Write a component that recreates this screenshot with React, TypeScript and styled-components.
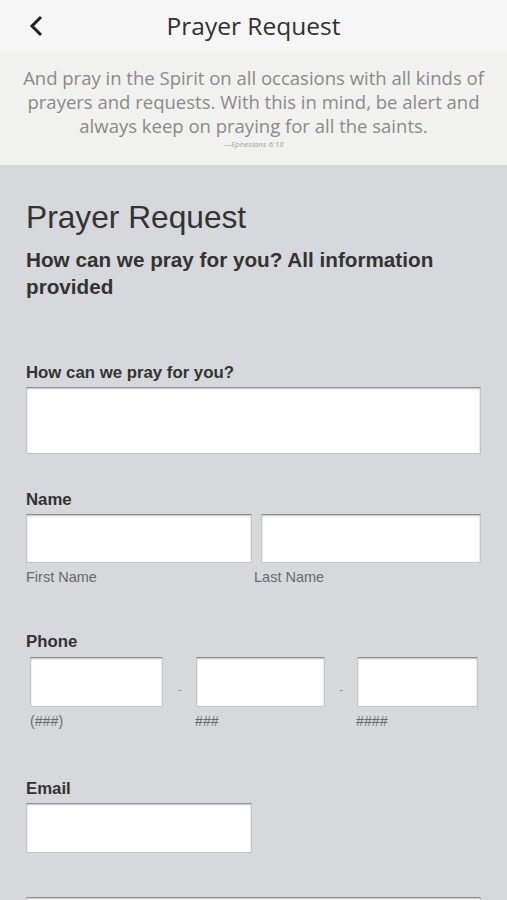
import React from 'react';
import styled, { createGlobalStyle } from 'styled-components';

const GlobalStyle = createGlobalStyle`
  html, body {
    margin: 0;
    padding: 0;
    background: #d6d8db;
  }
  * {
    box-sizing: border-box;
  }
`;

const Page = styled.div`
  width: 507px;
  height: 900px;
  background: #d6d8db;
  overflow: hidden;
`;

const Header = styled.header`
  height: 52px;
  background: #f6f6f6;
  display: grid;
  grid-template-columns: 60px 1fr 60px;
  align-items: center;
`;

const BackButton = styled.button`
  border: none;
  background: none;
  padding: 0 0 0 28px;
  height: 52px;
  display: flex;
  align-items: center;
  cursor: pointer;
`;

const HeaderTitle = styled.h1`
  margin: 0;
  text-align: center;
  font-family: 'Open Sans', sans-serif;
  font-weight: 400;
  font-size: 24.5px;
  color: #303030;
  padding-bottom: 2px;
`;

const Verse = styled.section`
  background: #f1f1ef;
  padding: 14px 8px 16px;
  text-align: center;
  font-family: 'Open Sans', sans-serif;
`;

const VerseText = styled.p`
  margin: 0;
  font-size: 18.5px;
  line-height: 24px;
  color: #8a8a8a;
`;

const Citation = styled.p`
  margin: 1px 0 0;
  font-size: 8px;
  line-height: 10px;
  font-style: italic;
  color: #a3a3a3;
`;

const Form = styled.form`
  padding: 34px 26px 0;
  font-family: 'Liberation Sans', Arial, sans-serif;
`;

const Heading = styled.h2`
  margin: 0;
  font-weight: 400;
  font-size: 31.7px;
  line-height: 36px;
  color: #333;
`;

const Intro = styled.p`
  margin: 11px 0 0;
  font-weight: 700;
  font-size: 20.7px;
  line-height: 27px;
  color: #333;
`;

const Field = styled.div<{ $top: number }>`
  margin-top: ${({ $top }) => $top}px;
`;

const Label = styled.label<{ $gap?: number }>`
  display: block;
  font-weight: 700;
  font-size: 16.8px;
  line-height: 18px;
  color: #333;
  margin-bottom: ${({ $gap }) => $gap ?? 5}px;
`;

const Box = styled.div<{ $h: number; $w?: string }>`
  height: ${({ $h }) => $h}px;
  width: ${({ $w }) => $w || '100%'};
  background: #fff;
  border: 1px solid #c4c5c7;
  border-top: 1px solid #8e8e8e;
  box-shadow: inset 0 1px 2px rgba(0, 0, 0, 0.25);
`;

const NameRow = styled.div`
  display: grid;
  grid-template-columns: 226px 220px;
  gap: 9px;
`;

const NameSubRow = styled.div`
  display: grid;
  grid-template-columns: 228px 1fr;
  margin-top: 6px;
`;

const SubLabel = styled.span`
  font-size: 14.5px;
  line-height: 16px;
  color: #6a6a6a;
`;

const PhoneRow = styled.div`
  display: grid;
  grid-template-columns: 133px 33px 129px 32px 121px;
  align-items: center;
  padding-left: 4px;
`;

const Dash = styled.span`
  text-align: center;
  font-size: 11px;
  color: #888;
  padding-top: 14px;
`;

const PhoneSubRow = styled.div`
  display: grid;
  grid-template-columns: 165px 161px 1fr;
  padding-left: 4px;
  margin-top: 6px;
`;

const PhoneSub = styled.span`
  font-size: 14.2px;
  line-height: 16px;
  color: #6a6a6a;
`;

export default function App() {
  return (
    <Page>
      <GlobalStyle />
      <Header>
        <BackButton aria-label="Back">
          <svg width="16" height="22" viewBox="0 0 16 22">
            <path d="M13 2 L4 11 L13 20" fill="none" stroke="#222" strokeWidth="3" />
          </svg>
        </BackButton>
        <HeaderTitle>Prayer Request</HeaderTitle>
        <span />
      </Header>
      <Verse>
        <VerseText>
          And pray in the Spirit on all occasions with all kinds of prayers and requests. With this
          in mind, be alert and always keep on praying for all the saints.
        </VerseText>
        <Citation>—Ephesians 6:18</Citation>
      </Verse>
      <Form>
        <Heading>Prayer Request</Heading>
        <Intro>How can we pray for you? All information provided</Intro>

        <Field $top={64}>
          <Label>How can we pray for you?</Label>
          <Box $h={67} />
        </Field>

        <Field $top={37}>
          <Label>Name</Label>
          <NameRow>
            <Box $h={49} />
            <Box $h={49} />
          </NameRow>
          <NameSubRow>
            <SubLabel>First Name</SubLabel>
            <SubLabel>Last Name</SubLabel>
          </NameSubRow>
        </Field>

        <Field $top={48}>
          <Label $gap={6}>Phone</Label>
          <PhoneRow>
            <Box $h={50} />
            <Dash>-</Dash>
            <Box $h={50} />
            <Dash>-</Dash>
            <Box $h={50} />
          </PhoneRow>
          <PhoneSubRow>
            <PhoneSub>(###)</PhoneSub>
            <PhoneSub>###</PhoneSub>
            <PhoneSub>####</PhoneSub>
          </PhoneSubRow>
        </Field>

        <Field $top={51}>
          <Label>Email</Label>
          <Box $h={50} $w="226px" />
        </Field>

        <Field $top={44}>
          <Box $h={49} />
        </Field>
      </Form>
    </Page>
  );
}
